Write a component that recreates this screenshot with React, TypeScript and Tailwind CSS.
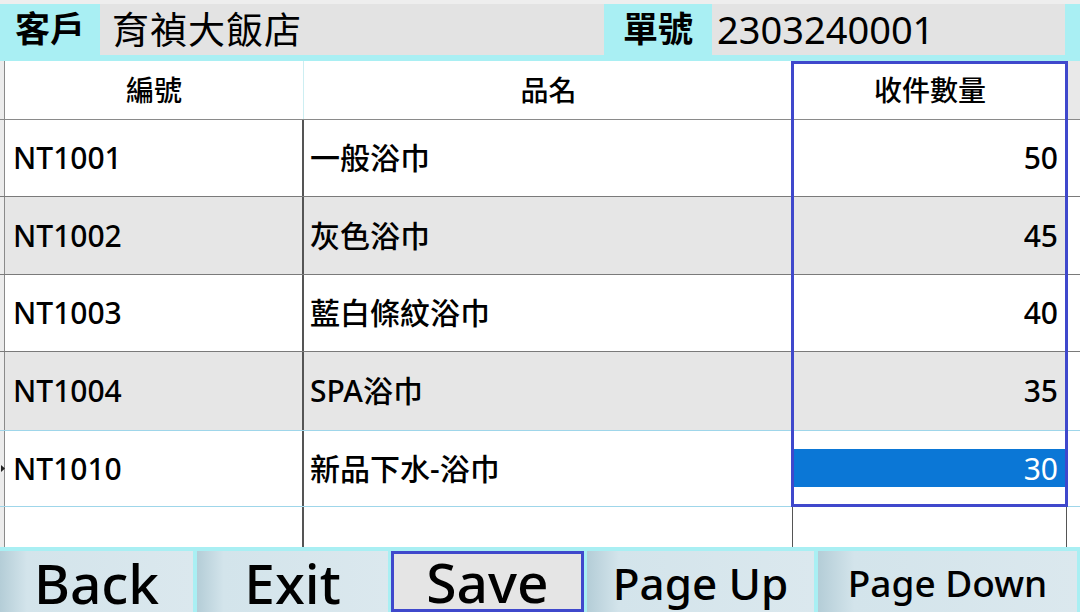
import React from 'react';

interface Item {
  code: string;
  name: string;
  qty: number;
}

const items: Item[] = [
  { code: 'NT1001', name: '一般浴巾', qty: 50 },
  { code: 'NT1002', name: '灰色浴巾', qty: 45 },
  { code: 'NT1003', name: '藍白條紋浴巾', qty: 40 },
  { code: 'NT1004', name: 'SPA浴巾', qty: 35 },
  { code: 'NT1010', name: '新品下水-浴巾', qty: 30 },
];

const rowHeights = ['h-[77px]', 'h-[78px]', 'h-[77px]', 'h-[78px]', 'h-[77px]'];

const font = "font-['Noto_Sans','Noto_Sans_CJK_TC',sans-serif]";
const btnBg = 'bg-[linear-gradient(to_right,#b4cdd7,#d3e4eb_14%,#dbe8ee)]';
const cols = 'grid grid-cols-[5px_299px_489px_274px_13px]';

export default function App() {
  return (
    <div className={`w-[1080px] h-[612px] overflow-hidden flex flex-col bg-[#a9eff3] text-black ${font}`}>
      {/* top info bar */}
      <div className="h-[4px] bg-[#eeeeee]" />
      <div className="h-[57px] flex items-start">
        <div className="w-[100px] h-[51px] flex items-center justify-center text-[35px] font-semibold">客戶</div>
        <div className="w-[504px] h-[51px] bg-[#e3e3e3] flex items-center pl-[12px] text-[37px] tracking-[1px]">育禎大飯店</div>
        <div className="w-[108px] h-[51px] flex items-center justify-center text-[35px] font-semibold">單號</div>
        <div className="w-[353px] h-[51px] bg-[#e3e3e3] flex items-center pl-[5px] text-[38px]">2303240001</div>
      </div>

      {/* grid */}
      <div className="relative h-[487px] bg-white flex flex-col">
        <div className={`${cols} h-[59px] border-b border-[#8a8a8a] text-[28px] font-medium`}>
          <div className="bg-[#ececec] border-r border-[#8a8a8a]" />
          <div className="flex items-center justify-center border-r border-[#cdeef2]">編號</div>
          <div className="flex items-center justify-center">品名</div>
          <div className="flex items-center justify-center">收件數量</div>
          <div className="bg-[#e9e9e9] border-l border-[#cfcfcf]" />
        </div>

        {items.map((it, i) => {
          const selected = i === items.length - 1;
          const odd = i % 2 === 1;
          return (
            <div
              key={it.code}
              className={`${cols} ${rowHeights[i]} text-[30px] font-medium ${odd ? 'bg-[#e6e6e6]' : 'bg-white'} ${
                selected ? 'border-y border-[#9fd6ea]' : i === items.length - 2 ? '' : 'border-b border-[#7a7a7a]'
              }`}
            >
              <div className="bg-[#ececec] border-r border-[#8a8a8a] relative">
                {selected && (
                  <svg className="absolute left-[1px] top-[34px]" width="4" height="7" viewBox="0 0 4 7">
                    <path d="M0 0 L4 3.5 L0 7 Z" fill="#222" />
                  </svg>
                )}
              </div>
              <div className="flex items-center pl-[8px] border-r-2 border-[#555]">{it.code}</div>
              <div className="flex items-center pl-[6px]">{it.name}</div>
              <div className="flex items-center justify-end">
                {selected ? (
                  <div className="w-full h-[38px] bg-[#0b77d6] text-white font-normal flex items-center justify-end pr-[9px]">{it.qty}</div>
                ) : (
                  <span className="pr-[9px]">{it.qty}</span>
                )}
              </div>
              <div className={`bg-white border-l ${selected ? 'border-[#bdbdbd]' : 'border-transparent'}`} />
            </div>
          );
        })}

        {/* empty new row */}
        <div className={`${cols} flex-1`}>
          <div className="bg-[#ececec] border-r border-[#8a8a8a]" />
          <div className="border-r-2 border-[#555]" />
          <div className="border-r border-[#555]" />
          <div className="border-r border-[#555]" />
          <div />
        </div>

        {/* current column frame */}
        <div className="absolute left-[791px] top-0 w-[277px] h-[446px] border-[3px] border-[#3f48cc] pointer-events-none" />
      </div>

      {/* buttons */}
      <div className="flex-1 flex pt-[4px] leading-none">
        <button className={`w-[193px] ${btnBg} flex items-center justify-center text-[55px] font-medium pt-[2px]`}>Back</button>
        <button className={`ml-[4px] w-[191px] ${btnBg} flex items-center justify-center text-[55px] font-medium pt-[2px]`}>Exit</button>
        <button className="ml-[3px] w-[193px] bg-[#e5e5e5] border-[3px] border-[#3f48cc] flex items-center justify-center text-[55px] font-medium">Save</button>
        <button className={`ml-[3px] w-[227px] ${btnBg} flex items-center justify-center text-[44px] font-medium pt-[2px]`}>Page Up</button>
        <button className={`ml-[4px] w-[259px] ${btnBg} flex items-center justify-center text-[37px] font-medium pt-[2px]`}>Page Down</button>
      </div>
    </div>
  );
}
